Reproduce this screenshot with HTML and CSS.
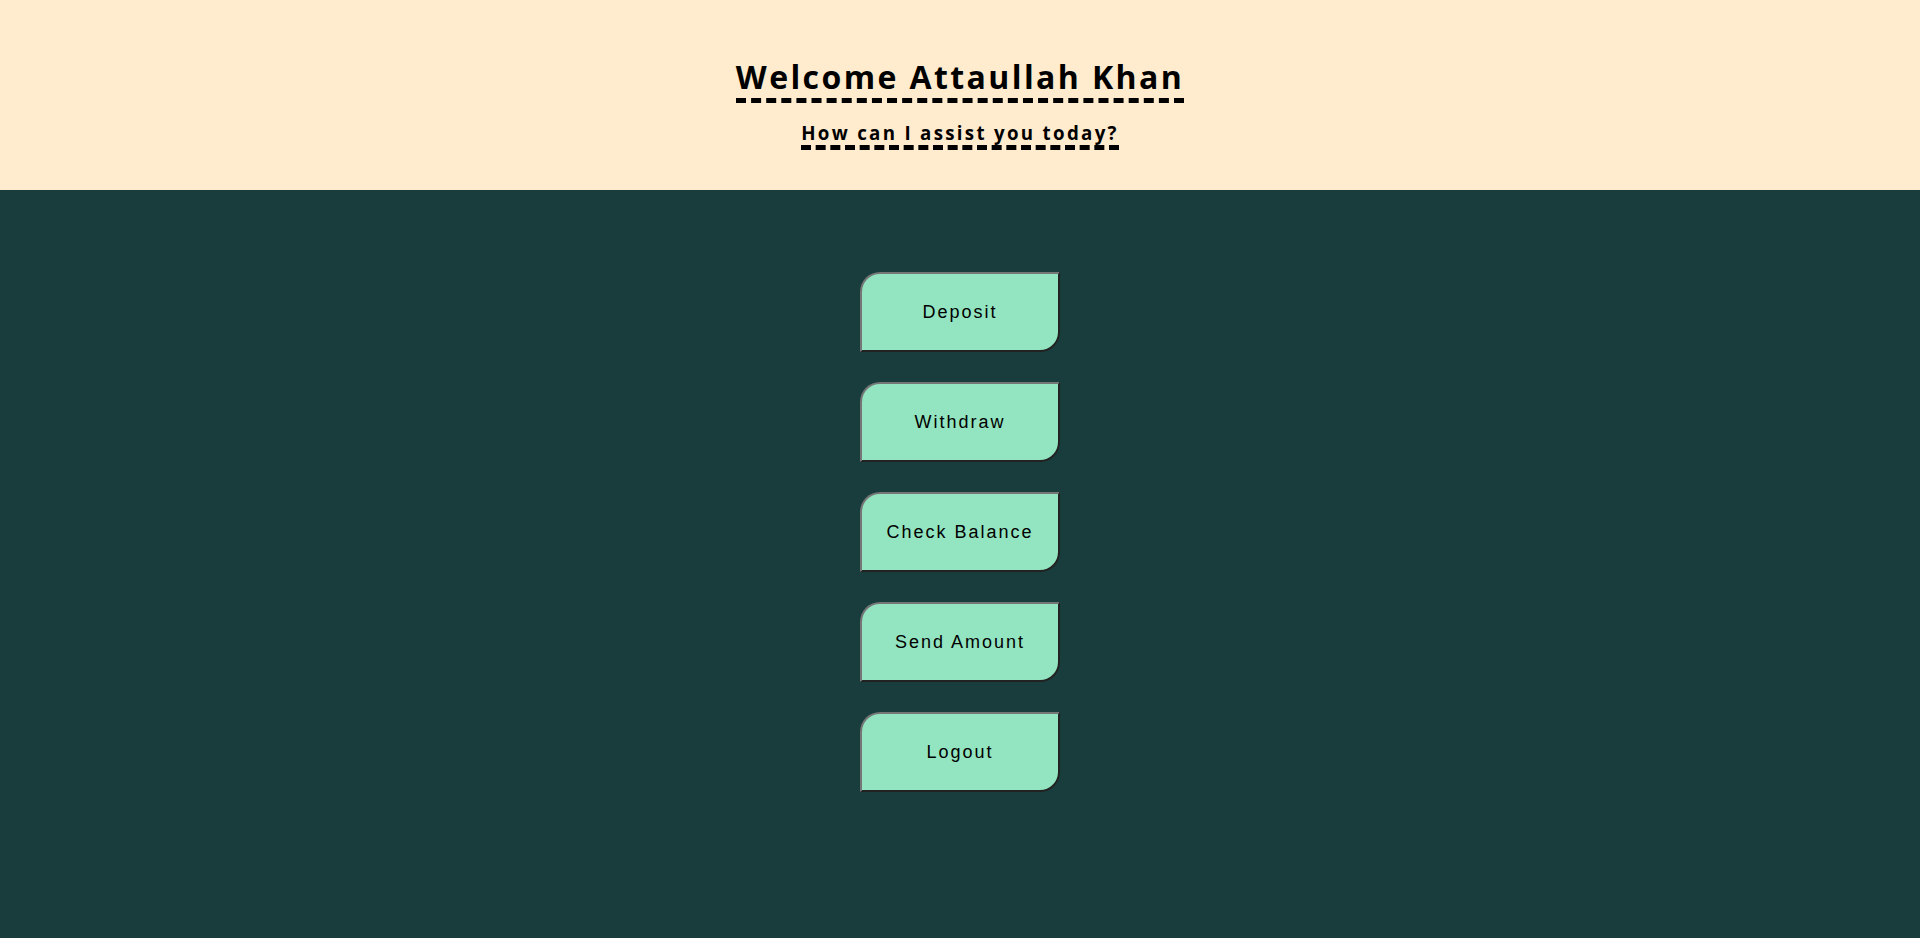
FILE: index.html
```html
<!DOCTYPE html>
<html lang="en">
<head>
<meta charset="utf-8">
<title>ATM</title>
<link rel="stylesheet" href="styles.css">
</head>
<body>
<header class="top">
  <h1 class="title">Welcome Attaullah Khan</h1>
  <h3 class="subtitle">How can I assist you today?</h3>
</header>
<main class="menu">
  <button class="btn">Deposit</button>
  <button class="btn">Withdraw</button>
  <button class="btn">Check Balance</button>
  <button class="btn">Send Amount</button>
  <button class="btn">Logout</button>
</main>
</body>
</html>
```
FILE: styles.css
```css
html, body {
  margin: 0;
  padding: 0;
  height: 100%;
}
body {
  background: #193d3d;
  display: flex;
  flex-direction: column;
}
.top {
  background: #ffebcd;
  height: 190px;
  box-sizing: border-box;
  padding-top: 55px;
  display: flex;
  flex-direction: column;
  align-items: center;
  font-family: "Open Sans", "Noto Sans", sans-serif;
  color: #000;
}
.title {
  margin: 0;
  font-size: 32px;
  font-weight: 700;
  letter-spacing: 2.4px;
  border-bottom: 5px dashed #000;
  line-height: normal;
}
.subtitle {
  margin: 17px 0 0;
  font-size: 18.72px;
  font-weight: 700;
  letter-spacing: 2.3px;
  border-bottom: 5px dashed #000;
  line-height: normal;
}
.menu {
  flex: 1;
  display: flex;
  flex-direction: column;
  align-items: center;
  gap: 30px;
  padding-top: 82px;
}
.btn {
  width: 200px;
  height: 80px;
  box-sizing: border-box;
  background: #93e5c1;
  border: 2px solid #767676;
  border-top-color: #767676;
  border-left-color: #767676;
  border-right-color: #222;
  border-bottom-color: #222;
  border-radius: 20px 0 20px 0;
  font-family: "Liberation Sans", Arial, sans-serif;
  font-size: 18px;
  letter-spacing: 2px;
  color: #000;
  cursor: pointer;
}
```
